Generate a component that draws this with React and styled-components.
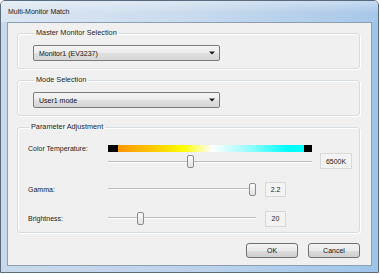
import React from 'react'
import styled, {createGlobalStyle} from 'styled-components'

const GlobalStyle = createGlobalStyle`
body{
  margin:0;
  background:#ffffff;
  font-family:"Liberation Sans", Arial, sans-serif;
  color:#222222;
}
`

const ColorTemp = {value:0.4}
const Gamma = {value:1}
const Brightness = {value:0.206}

function Slider({width, value, trackTop}){
    const left = Math.round(value * (width - 7))
    return(
        <SliderBox width={width}>
            <Track top={trackTop}/>
            <Thumb style={{left:left}}/>
        </SliderBox>
    )
}

function Combo({children}){
    return(
        <Dropdown>
            <span>{children}</span>
            <svg width="6" height="4" viewBox="0 0 6 4">
                <path d="M0 0.5 H6 L3 3.5 Z" fill="#1a1a1a"/>
            </svg>
        </Dropdown>
    )
}

export default function App(){
    return(
        <>
            <GlobalStyle/>
            <Window>
                <TitleBar>Multi-Monitor Match</TitleBar>
                <Frame>
                    <Client>
                        <Group first pad={15}>
                            <Legend>Master Monitor Selection</Legend>
                            <Combo>Monitor1 (EV3237)</Combo>
                        </Group>
                        <Group pad={15}>
                            <Legend>Mode Selection</Legend>
                            <Combo>User1 mode</Combo>
                        </Group>
                        <Group pad={10} top={13} bottom={6}>
                            <Legend>Parameter Adjustment</Legend>
                            <BarRow>
                                <Label>Color Temperature:</Label>
                                <ColorBar/>
                            </BarRow>
                            <SliderRow>
                                <Slider width={204} value={ColorTemp.value} trackTop={6}/>
                                <ValueBox w={32} h={16} gap={8}>6500K</ValueBox>
                            </SliderRow>
                            <ParamRow space={13}>
                                <Label>Gamma:</Label>
                                <Slider width={148} value={Gamma.value} trackTop={5}/>
                                <ValueBox w={21} h={15} gap={9}>2.2</ValueBox>
                            </ParamRow>
                            <ParamRow space={14}>
                                <Label>Brightness:</Label>
                                <Slider width={148} value={Brightness.value} trackTop={5}/>
                                <ValueBox w={21} h={16} gap={9}>20</ValueBox>
                            </ParamRow>
                        </Group>
                        <Buttons>
                            <Btn>OK</Btn>
                            <Btn>Cancel</Btn>
                        </Buttons>
                    </Client>
                </Frame>
            </Window>
        </>
    )
}

const Window = styled.div`
box-sizing:border-box;
width:379px;
height:273px;
border:1px solid #5a6b7e;
border-radius:5px 5px 0 0;
display:flex;
flex-direction:column;
overflow:hidden;
background:linear-gradient(to right,#c9d9eb 0%,#bcd2ea 55%,#9fc4ea 100%);
`
const TitleBar = styled.div`
height:21px;
flex:none;
display:flex;
align-items:center;
padding-left:7px;
font-size:7px;
color:#1a1a1a;
background:
  linear-gradient(to bottom,rgba(255,255,255,0.35),rgba(255,255,255,0) 60%),
  linear-gradient(to right,#dce6f1 0%,#cbdcee 45%,#b2cde9 85%,#a7c7ea 100%);
`
const Frame = styled.div`
flex:1;
display:flex;
padding:0 6px 6px 6px;
`
const Client = styled.div`
flex:1;
border:1px solid #8d9fb3;
background:#f0f0f0;
padding:0 11px 0 9px;
display:flex;
flex-direction:column;
`
const Group = styled.fieldset`
margin:${p => p.first ? '5px' : '6px'} 0 0 0;
padding:${p => p.top || 7}px 0 ${p => p.bottom || 7}px ${p => p.pad}px;
border:1px solid #d8dde2;
border-radius:3px;
box-shadow:inset 1px 1px 0 #ffffff, 1px 1px 0 #ffffff;
min-width:0;
`
const Legend = styled.legend`
font-size:7.3px;
line-height:10px;
padding:0 2px;
margin-left:1px;
color:#1e1e1e;
`
const Dropdown = styled.div`
box-sizing:border-box;
width:187px;
height:16px;
border:1px solid #7b7b7b;
border-radius:2px;
background:linear-gradient(to bottom,#f4f4f4 0%,#ececec 50%,#e0e0e0 51%,#d6d6d6 100%);
display:flex;
align-items:center;
justify-content:space-between;
padding:0 4px 0 5px;
font-size:7px;
color:#111111;
`
const BarRow = styled.div`
display:flex;
align-items:center;
height:7px;
`
const Label = styled.div`
width:80px;
flex:none;
font-size:7px;
color:#222222;
`
const ColorBar = styled.div`
width:204px;
height:7px;
background:linear-gradient(to right,
  #000 0%, #000 5%, #ff9600 5%, #ffc800 22%, #ffff00 37%,
  #ffffff 51%, #9ffcff 68%, #00ffff 88%, #00ffff 96%, #000 96%, #000 100%);
`
const SliderRow = styled.div`
display:flex;
align-items:center;
height:16px;
margin-top:1px;
padding-left:80px;
`
const ParamRow = styled.div`
display:flex;
align-items:center;
height:15px;
margin-top:${p => p.space}px;
`
const SliderBox = styled.div`
position:relative;
width:${p => p.width}px;
height:13px;
flex:none;
`
const Track = styled.div`
margin-top:${p => p.top}px;
height:0;
border-top:1px solid #bdbdbd;
border-bottom:1px solid #ffffff;
`
const Thumb = styled.div`
position:absolute;
top:0;
box-sizing:border-box;
width:7px;
height:13px;
border:1px solid #8c8c8c;
border-radius:2px;
background:linear-gradient(to bottom,#fbfbfb,#e3e3e3);
`
const ValueBox = styled.div`
box-sizing:border-box;
width:${p => p.w}px;
height:${p => p.h}px;
margin-left:${p => p.gap}px;
border:1px solid #d9d9d9;
background:#f3f3f3;
display:flex;
align-items:center;
justify-content:center;
font-size:7px;
color:#222222;
flex:none;
`
const Buttons = styled.div`
display:flex;
justify-content:flex-end;
gap:10px;
margin-top:10px;
`
const Btn = styled.button`
box-sizing:border-box;
width:52px;
height:15px;
padding:0;
border:1px solid #707070;
border-radius:3px;
background:linear-gradient(to bottom,#f3f3f3 0%,#ebebeb 50%,#dddddd 51%,#cfcfcf 100%);
font-family:"Liberation Sans", Arial, sans-serif;
font-size:7px;
color:#111111;
`
